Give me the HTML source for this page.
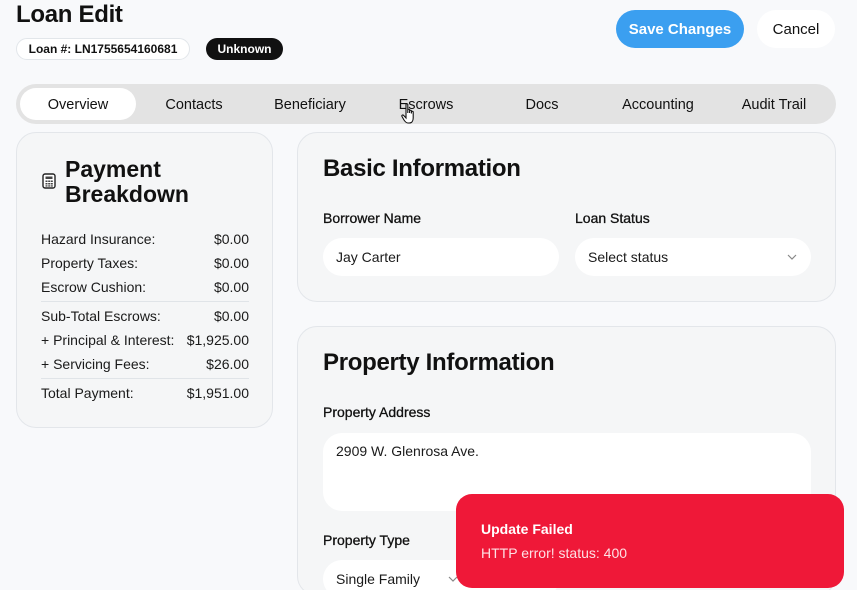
<!DOCTYPE html>
<html><head><meta charset="utf-8"><style>
*{box-sizing:border-box;margin:0;padding:0}
html,body{width:857px;height:590px;overflow:hidden}
body{background:#f8f9fb;font-family:"Liberation Sans",Arial,sans-serif;color:#111;position:relative}
.abs{position:absolute}
h1{position:absolute;left:16px;top:1px;font-size:24px;font-weight:700;letter-spacing:-0.3px}
.badge{position:absolute;top:38px;height:22px;border-radius:11px;font-size:12px;font-weight:700;display:flex;align-items:center;justify-content:center}
.btn{position:absolute;top:10px;height:38px;border-radius:19px;font-size:15px;display:flex;align-items:center;justify-content:center}
.tabs{position:absolute;left:16px;top:84px;width:820px;height:40px;background:#e3e3e3;border-radius:20px}
.tab{position:absolute;top:4px;width:116px;height:32px;display:flex;align-items:center;justify-content:center;font-size:14.5px;color:#111;padding-top:1px}
.card{position:absolute;background:#f5f6f7;border:1px solid #e3e6ea;border-radius:20px}
.row{position:absolute;left:24px;width:208px;display:flex;justify-content:space-between;font-size:14px;color:#1a1a1a}
.sep{position:absolute;left:24px;width:208px;height:1px;background:#e0e4e8}
.h2{position:absolute;font-size:24px;font-weight:600;letter-spacing:-0.3px}
.lbl{position:absolute;font-size:14px;font-weight:400;color:#111;-webkit-text-stroke:0.3px #111}
.inp{position:absolute;background:#fff;border-radius:19px;font-size:14px;padding-left:13px;display:flex;align-items:center;color:#1a1a1a}
</style></head><body>
<h1>Loan Edit</h1>
<div class="badge" style="left:16px;width:174px;background:#fff;border:1px solid #e2e6ea;color:#111">Loan #: LN1755654160681</div>
<div class="badge" style="left:206px;width:77px;background:#111;color:#fff">Unknown</div>
<div class="btn" style="left:616px;width:128px;background:#3b9ff0;color:#fff;font-weight:600">Save Changes</div>
<div class="btn" style="left:757px;width:78px;background:#fff;color:#111">Cancel</div>
<div class="tabs">
<div class="tab" style="left:4px;background:#fff;border-radius:16px">Overview</div>
<div class="tab" style="left:120px">Contacts</div>
<div class="tab" style="left:236px">Beneficiary</div>
<div class="tab" style="left:352px">Escrows</div>
<div class="tab" style="left:468px">Docs</div>
<div class="tab" style="left:584px">Accounting</div>
<div class="tab" style="left:700px">Audit Trail</div>
</div>
<svg class="abs" style="left:401px;top:102px" width="18" height="24" viewBox="0 0 18 24"><path d="M5 2.5c0-1 1.8-1 1.8 0V11V8c0-1 1.8-1 1.8 0v3V9c0-1 1.8-1 1.8 0v2.5V10c0-1 1.8-1 1.8 0v6c0 3-1.5 5-4 5H7c-2 0-3-1.5-4-3L1 14.5c-.6-1 .6-2 1.5-1.2L5 16Z" fill="#fff" stroke="#111" stroke-width="1.1"/></svg>
<div class="card" style="left:16px;top:132px;width:257px;height:296px">
<svg class="abs" style="left:25px;top:40px" width="14" height="16" viewBox="0 0 14 16"><rect x="1" y="1" width="12" height="14" rx="2" fill="#fff" stroke="#222" stroke-width="1.4"/><rect x="3.5" y="3.5" width="7" height="2.5" fill="#444"/><g fill="#444"><rect x="3.5" y="7.5" width="2" height="1.5"/><rect x="6.2" y="7.5" width="2" height="1.5"/><rect x="8.8" y="7.5" width="2" height="1.5"/><rect x="3.5" y="10" width="2" height="1.5"/><rect x="6.2" y="10" width="2" height="1.5"/><rect x="8.8" y="10" width="2" height="1.5"/><rect x="3.5" y="12.3" width="2" height="1.3"/><rect x="6.2" y="12.3" width="2" height="1.3"/><rect x="8.8" y="12.3" width="2" height="1.3"/></g></svg>
<div class="abs" style="left:48px;top:24px;font-size:23px;font-weight:600;line-height:25px">Payment<br>Breakdown</div>
<div class="row" style="top:98px"><span>Hazard Insurance:</span><span>$0.00</span></div>
<div class="row" style="top:122px"><span>Property Taxes:</span><span>$0.00</span></div>
<div class="row" style="top:146px"><span>Escrow Cushion:</span><span>$0.00</span></div>
<div class="sep" style="top:168px"></div>
<div class="row" style="top:175px"><span>Sub-Total Escrows:</span><span>$0.00</span></div>
<div class="row" style="top:199px"><span>+ Principal &amp; Interest:</span><span>$1,925.00</span></div>
<div class="row" style="top:223px"><span>+ Servicing Fees:</span><span>$26.00</span></div>
<div class="sep" style="top:245px"></div>
<div class="row" style="top:252px"><span>Total Payment:</span><span>$1,951.00</span></div>
</div>
<div class="card" style="left:297px;top:132px;width:539px;height:170px">
<div class="h2" style="left:25px;top:22px">Basic Information</div>
<div class="lbl" style="left:25px;top:77px">Borrower Name</div>
<div class="lbl" style="left:277px;top:77px">Loan Status</div>
<div class="inp" style="left:25px;top:105px;width:236px;height:38px">Jay Carter</div>
<div class="inp" style="left:277px;top:105px;width:236px;height:38px">Select status<svg class="abs" style="right:14px;top:16px" width="10" height="6" viewBox="0 0 10 6"><path d="M1 1l4 4 4-4" fill="none" stroke="#888" stroke-width="1.2"/></svg></div>
</div>
<div class="card" style="left:297px;top:326px;width:539px;height:270px">
<div class="h2" style="left:25px;top:22px">Property Information</div>
<div class="lbl" style="left:25px;top:77px">Property Address</div>
<div class="inp" style="left:25px;top:106px;width:488px;height:78px;align-items:flex-start;padding-top:10px">2909 W. Glenrosa Ave.</div>
<div class="lbl" style="left:25px;top:205px">Property Type</div>
<div class="inp" style="left:25px;top:233px;width:236px;height:38px">Single Family<svg class="abs" style="left:125px;top:16px" width="10" height="6" viewBox="0 0 10 6"><path d="M1 1l4 4 4-4" fill="none" stroke="#888" stroke-width="1.2"/></svg></div>
</div>
<div class="abs" style="left:456px;top:494px;width:388px;height:94px;background:#ef1838;border-radius:16px;color:#fff">
<div class="abs" style="left:25px;top:27px;font-size:14px;font-weight:700">Update Failed</div>
<div class="abs" style="left:25px;top:51px;font-size:14px;color:#fde0e4">HTTP error! status: 400</div>
</div>
</body></html>
